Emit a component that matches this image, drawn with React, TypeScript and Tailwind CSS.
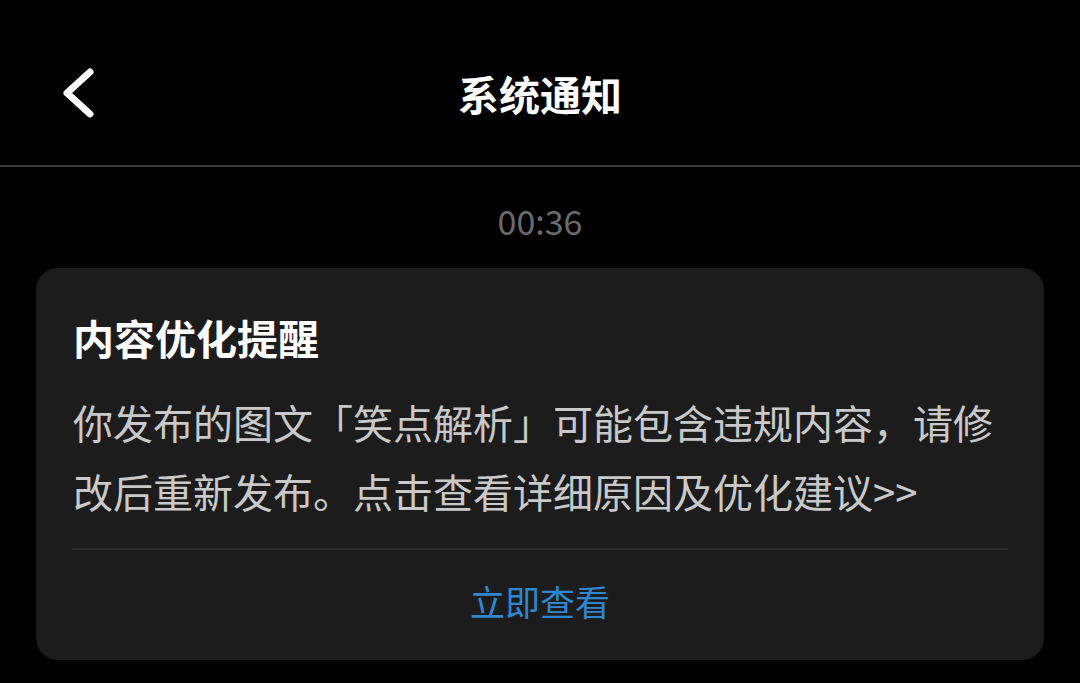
import React from "react";

export default function App() {
  return (
    <div
      className="w-[1080px] h-[683px] bg-black overflow-hidden"
      style={{ fontFamily: '"Noto Sans CJK SC", "Noto Sans", sans-serif' }}
    >
      <header className="h-[167px] pt-[20px] grid grid-cols-[1fr_auto_1fr] items-center border-b-[2px] border-[#3a3a3a]">
        <div className="pl-[58px] flex items-center">
          <svg width="40" height="56" viewBox="0 0 40 56" fill="none">
            <path
              d="M32 7 L9 28 L32 49"
              stroke="#ffffff"
              strokeWidth="7"
              strokeLinecap="round"
              strokeLinejoin="round"
            />
          </svg>
        </div>
        <h1 className="text-[41px] leading-[50px] font-bold text-white">系统通知</h1>
        <div />
      </header>

      <div className="pt-[34px] pb-[27px] text-center text-[34px] leading-[40px] text-[#6b6b6b]">
        00:36
      </div>

      <div className="mx-[36px] h-[392px] rounded-[22px] bg-[#1c1c1c] flex flex-col">
        <div className="pt-[44px] px-[37px] text-[41px] leading-[50px] font-bold text-white">
          内容优化提醒
        </div>
        <p className="mt-[26px] pl-[37px] pr-[30px] text-[40px] leading-[69px] text-[#c9c9c9]">
          你发布的图文「笑点解析」可能包含违规内容，请修改后重新发布。点击查看详细原因及优化建议&gt;&gt;
        </p>
        <div className="mt-[22px] mx-[36px] h-[2px] bg-[#2c2c2c]" />
        <div className="pt-[29px] pb-[37px] text-center text-[35px] leading-[44px] text-[#2f87d0]">
          立即查看
        </div>
      </div>
    </div>
  );
}
